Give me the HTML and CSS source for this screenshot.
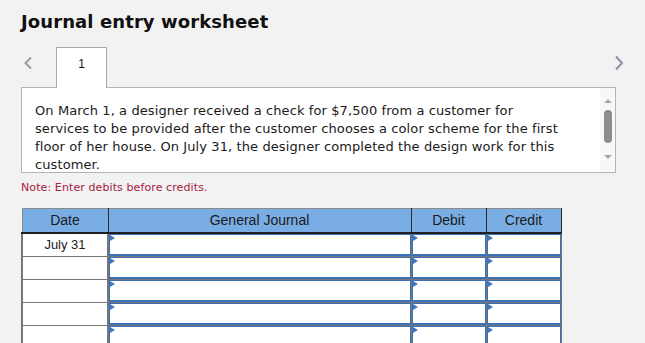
FILE: index.html
```html
<!DOCTYPE html>
<html lang="en">
<head>
    <meta charset="UTF-8">
    <meta name="viewport" content="width=device-width, initial-scale=1.0">
    <title>Journal entry worksheet</title>
    <link rel="stylesheet" href="styles.css">
</head>
<body>
    <div class="worksheet">
        <h1 class="worksheet-title">Journal entry worksheet</h1>

        <div class="tab-row">
            <button class="tab-arrow" aria-label="Previous">
                <svg width="10" height="14" viewBox="0 0 10 14"><path d="M8 1.5 L2.5 7 L8 12.5" fill="none" stroke="#9a9a9a" stroke-width="2"/></svg>
            </button>
            <div class="tab active">1</div>
            <button class="tab-arrow next" aria-label="Next">
                <svg width="10" height="16" viewBox="0 0 10 16"><path d="M2 1.5 L8 8 L2 14.5" fill="none" stroke="#8a94a6" stroke-width="2"/></svg>
            </button>
        </div>

        <div class="question-box">
            <div class="question-text">
                On March 1, a designer received a check for $7,500 from a customer for services to be provided after the customer chooses a color scheme for the first floor of her house. On July 31, the designer completed the design work for this customer.
            </div>
            <div class="fake-scrollbar">
                <span class="arrow-up"></span>
                <span class="thumb"></span>
                <span class="arrow-down"></span>
            </div>
        </div>

        <p class="note">Note: Enter debits before credits.</p>

        <table class="journal">
            <colgroup>
                <col class="col-date">
                <col class="col-account">
                <col class="col-amount">
                <col class="col-amount">
            </colgroup>
            <thead>
                <tr>
                    <th>Date</th>
                    <th>General Journal</th>
                    <th>Debit</th>
                    <th>Credit</th>
                </tr>
            </thead>
            <tbody>
                <tr>
                    <td class="date">July 31</td>
                    <td><div class="entry"></div></td>
                    <td><div class="entry"></div></td>
                    <td><div class="entry"></div></td>
                </tr>
                <tr>
                    <td class="date"></td>
                    <td><div class="entry"></div></td>
                    <td><div class="entry"></div></td>
                    <td><div class="entry"></div></td>
                </tr>
                <tr>
                    <td class="date"></td>
                    <td><div class="entry"></div></td>
                    <td><div class="entry"></div></td>
                    <td><div class="entry"></div></td>
                </tr>
                <tr>
                    <td class="date"></td>
                    <td><div class="entry"></div></td>
                    <td><div class="entry"></div></td>
                    <td><div class="entry"></div></td>
                </tr>
                <tr>
                    <td class="date"></td>
                    <td><div class="entry"></div></td>
                    <td><div class="entry"></div></td>
                    <td><div class="entry"></div></td>
                </tr>
                <tr>
                    <td class="date"></td>
                    <td><div class="entry"></div></td>
                    <td><div class="entry"></div></td>
                    <td><div class="entry"></div></td>
                </tr>
            </tbody>
        </table>
    </div>
</body>
</html>
```

FILE: styles.css
```css
* {
    margin: 0;
    padding: 0;
    box-sizing: border-box;
}

body {
    background: #f2f2f2;
    font-family: "DejaVu Sans", Verdana, sans-serif;
    color: #1a1a1a;
    overflow: hidden;
}

.worksheet {
    padding: 11px 29px 0 21px;
}

.worksheet-title {
    font-size: 18px;
    font-weight: bold;
    line-height: 22px;
    letter-spacing: 0.1px;
    color: #111;
}

.tab-row {
    display: flex;
    align-items: flex-start;
    margin-top: 14px;
    margin-right: -8px;
}

.tab-arrow {
    background: none;
    border: none;
    cursor: pointer;
    display: flex;
    margin: 9px 0 0 2px;
}

.tab-arrow.next {
    margin: 8px 0 0 auto;
}

.tab {
    position: relative;
    z-index: 1;
    width: 51px;
    height: 41px;
    margin-left: 23px;
    margin-bottom: -1px;
    background: #fff;
    border: 1px solid #a8a8a8;
    border-bottom: none;
    text-align: center;
    font-family: "Liberation Sans", Arial, sans-serif;
    font-size: 12px;
    padding-top: 9px;
    color: #111;
}

.question-box {
    display: flex;
    height: 86px;
    background: #fff;
    border: 1px solid #b4b4b4;
    overflow: hidden;
}

.question-text {
    flex: 1;
    font-size: 13px;
    line-height: 18px;
    letter-spacing: 0.1px;
    padding: 14px 40px 0 13px;
    color: #1a1a1a;
}

.fake-scrollbar {
    width: 15px;
    background: #f8f8f8;
    display: flex;
    flex-direction: column;
    align-items: center;
    padding-top: 11px;
}

.arrow-up {
    width: 0;
    height: 0;
    border-left: 4px solid transparent;
    border-right: 4px solid transparent;
    border-bottom: 4px solid #a6a6a6;
}

.thumb {
    width: 8px;
    height: 33px;
    margin-top: 7px;
    border-radius: 4px;
    background: #8d8d8d;
}

.arrow-down {
    width: 0;
    height: 0;
    margin-top: 12px;
    border-left: 4px solid transparent;
    border-right: 4px solid transparent;
    border-top: 4px solid #a6a6a6;
}

.note {
    font-size: 11px;
    line-height: 14px;
    letter-spacing: 0.1px;
    color: #a8213e;
    margin-top: 8px;
}

.journal {
    margin-top: 13px;
    width: 539px;
    table-layout: fixed;
    border-collapse: collapse;
    font-family: "Liberation Sans", Arial, sans-serif;
    font-size: 13px;
}

.col-date {
    width: 86px;
}

.col-account {
    width: 303px;
}

.col-amount {
    width: 75px;
}

.journal th {
    height: 24px;
    background: #79ade4;
    color: #1a1a1a;
    font-size: 14px;
    font-weight: normal;
    border-top: 1px solid #8a8a8a;
    border-left: 1px solid #2a2a2a;
    border-right: 1px solid #2a2a2a;
    border-bottom: 2px solid #1f1f1f;
    padding: 0;
}

.journal th:first-child {
    border-left: 1px solid #8a8a8a;
}

.journal td {
    height: 23px;
    padding: 0;
    border: 1px solid #767676;
    background: #fff;
    vertical-align: top;
}

.journal td:first-child,
.journal td:nth-child(2) {
    border-left: 2px solid #767676;
}

.journal td.date {
    text-align: center;
    vertical-align: middle;
    color: #222;
}

.entry {
    position: relative;
    height: 22px;
    border: 1px solid #3d71b7;
    border-bottom-width: 2px;
}

.entry::before {
    content: "";
    position: absolute;
    top: 0;
    left: 0;
    border-top: 3px solid transparent;
    border-bottom: 3px solid transparent;
    border-left: 5px solid #3d78c4;
}
```
